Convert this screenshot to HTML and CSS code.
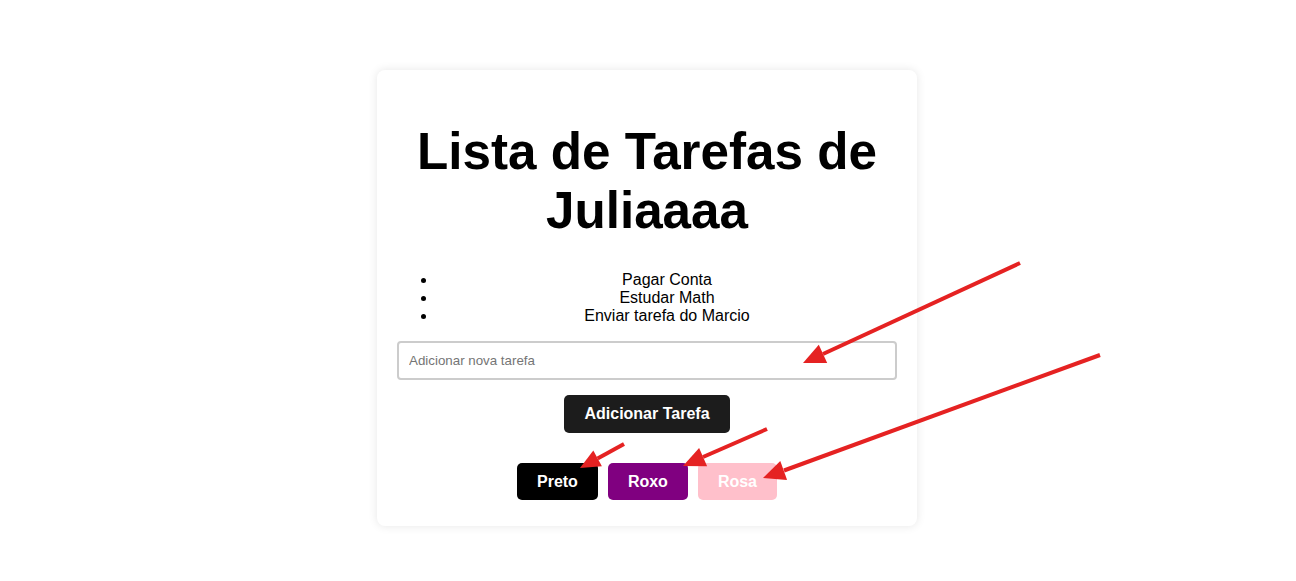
FILE: index.html
```html
<!DOCTYPE html>
<html lang="pt">
<head>
<meta charset="utf-8">
<title>Lista de Tarefas</title>
<link rel="stylesheet" href="styles.css">
</head>
<body>
<div class="card">
  <h1 class="title">Lista de Tarefas de Juliaaaa</h1>
  <ul class="tasks">
    <li>Pagar Conta</li>
    <li>Estudar Math</li>
    <li>Enviar tarefa do Marcio</li>
  </ul>
  <input class="task-input" type="text" placeholder="Adicionar nova tarefa">
  <div class="add-row">
    <button class="btn btn-add">Adicionar Tarefa</button>
  </div>
  <div class="color-row">
    <button class="btn btn-black">Preto</button>
    <button class="btn btn-purple">Roxo</button>
    <button class="btn btn-pink">Rosa</button>
  </div>
</div>
<svg class="annotations" width="1296" height="581" viewBox="0 0 1296 581" aria-hidden="true">
  <g stroke="#e52222" stroke-width="4" stroke-linecap="butt" fill="none">
    <line x1="1020" y1="263" x2="823" y2="354"/>
    <line x1="1100" y1="355" x2="784" y2="470.5"/>
    <line x1="767" y1="429" x2="703" y2="457"/>
    <line x1="624" y1="444" x2="597.6" y2="458.4"/>
  </g>
  <g fill="#e52222">
    <polygon points="803,363 827.2,362.9 818.8,344.7"/>
    <polygon points="763,478 787.1,479.9 780.3,461.1"/>
    <polygon points="683,466 707.1,466.3 699.1,448"/>
    <polygon points="580,468 601.9,466.3 593.3,450.5"/>
  </g>
</svg>
</body>
</html>
```

FILE: styles.css
```css
html, body {
  margin: 0;
  padding: 0;
  background: #ffffff;
}

body {
  font-family: "Liberation Sans", Arial, sans-serif;
  color: #000;
  padding: 70px 2px 0 0;
  position: relative;
  min-height: 581px;
  box-sizing: border-box;
}

.card {
  width: 500px;
  margin: 0 auto;
  padding: 20px 20px 26px;
  background: #fff;
  border-radius: 8px;
  box-shadow: 0 0 10px rgba(0, 0, 0, 0.1);
  text-align: center;
}

.title {
  font-size: 51.2px;
  font-weight: bold;
  margin: 32px 0 31px;
  line-height: normal;
}

.tasks {
  font-size: 16px;
  margin: 0 0 16px;
  padding-left: 40px;
  text-align: center;
}

.task-input {
  display: block;
  width: 100%;
  box-sizing: border-box;
  padding: 10px;
  border: 2px solid #cccccc;
  border-radius: 4px;
  font-family: "Liberation Sans", Arial, sans-serif;
  font-size: 13.33px;
  margin: 0;
}

.task-input::placeholder {
  color: #757575;
}

.add-row {
  margin-top: 15px;
  display: flex;
  justify-content: center;
}

.btn {
  font-family: "Liberation Sans", Arial, sans-serif;
  font-size: 16px;
  font-weight: bold;
  color: #fff;
  border: none;
  border-radius: 5px;
  padding: 10px 20px;
  line-height: normal;
  cursor: pointer;
}

.btn-add {
  background: #1c1c1c;
}

.color-row {
  margin-top: 30px;
  display: flex;
  justify-content: center;
  gap: 10px;
}

.color-row .btn {
  line-height: 17px;
}

.btn-black {
  background: #000000;
}

.btn-purple {
  background: #800080;
}

.btn-pink {
  background: #ffc0cb;
}

.annotations {
  position: absolute;
  top: 0;
  left: 0;
  pointer-events: none;
}
```
